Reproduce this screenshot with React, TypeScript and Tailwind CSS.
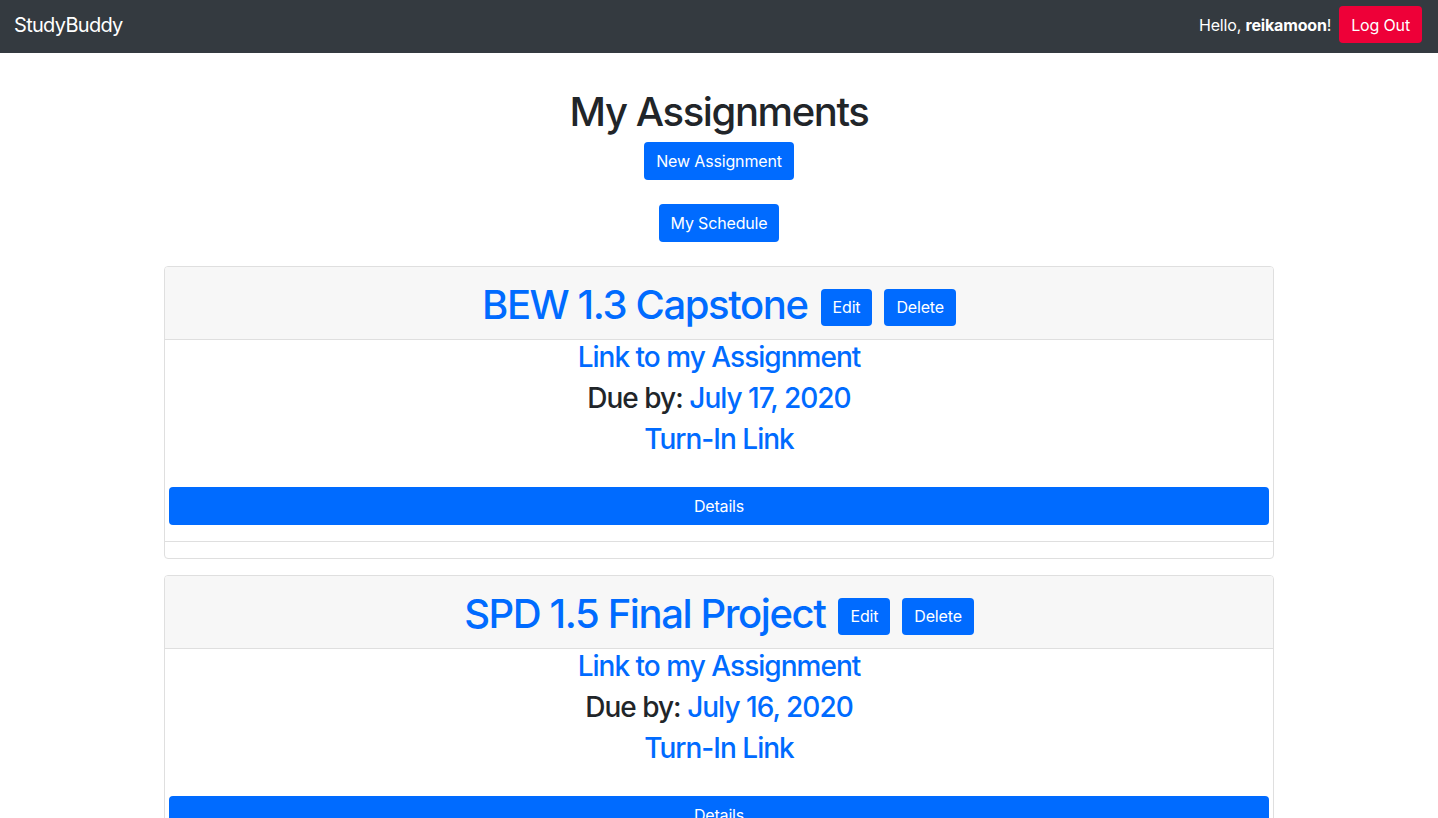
const assignments = [
  { title: 'BEW 1.3 Capstone', due: 'July 17, 2020' },
  { title: 'SPD 1.5 Final Project', due: 'July 16, 2020' },
];

export default function App() {
  return (
    <div className="min-h-screen bg-white font-['Inter',sans-serif] text-[#212529]">
      <nav className="flex h-[53px] items-center justify-between bg-[#343a40] pr-4 pb-1 pl-[14px]">
        <a className="text-[20px] leading-[30px] tracking-[-0.035em] text-white">
          StudyBuddy
        </a>
        <div className="flex items-center gap-2">
          <span className="text-[16px] tracking-[-0.01em] text-white">
            Hello, <b>reikamoon</b>!
          </span>
          <button className="h-[37px] rounded-[4px] bg-[#ee0038] px-3 text-[16px] tracking-[-0.01em] text-white">
            Log Out
          </button>
        </div>
      </nav>

      <main className="mx-auto w-[1110px] pt-[35px]">
        <h1 className="mb-[6px] text-center text-[40px] leading-[48px] font-medium tracking-[-0.035em]">
          My Assignments
        </h1>
        <div className="flex flex-col items-center gap-6">
          <PrimaryButton>New Assignment</PrimaryButton>
          <PrimaryButton>My Schedule</PrimaryButton>
        </div>

        <div className="mt-6 flex flex-col gap-4">
          {assignments.map((a) => (
            <AssignmentCard key={a.title} title={a.title} due={a.due} />
          ))}
        </div>
      </main>
    </div>
  );
}

function PrimaryButton({ children }: { children: React.ReactNode }) {
  return (
    <button className="h-[38px] rounded-[4px] bg-[#006bff] px-3 text-[16px] tracking-[-0.01em] text-white">
      {children}
    </button>
  );
}

function AssignmentCard({ title, due }: { title: string; due: string }) {
  return (
    <div className="overflow-hidden rounded-[4px] border border-[#dfdfdf]">
      <div className="flex items-center justify-center gap-[13px] border-b border-[#dfdfdf] bg-[#f7f7f7] pt-[14px] pb-[10px]">
        <h1 className="text-[40px] leading-[48px] font-medium tracking-[-0.035em] text-[#006bff]">
          {title}
        </h1>
        <div className="mt-1 flex gap-3">
          <button className="h-[37px] rounded-[4px] bg-[#006bff] px-3 text-[16px] tracking-[-0.01em] text-white">
            Edit
          </button>
          <button className="h-[37px] rounded-[4px] bg-[#006bff] px-3 text-[16px] tracking-[-0.01em] text-white">
            Delete
          </button>
        </div>
      </div>
      <div className="pt-px text-center">
        <h3 className="mb-2 text-[28px] leading-[33px] font-medium tracking-[-0.035em] text-[#006bff]">
          Link to my Assignment
        </h3>
        <h3 className="mb-2 text-[28px] leading-[33px] font-medium tracking-[-0.035em]">
          Due by: <span className="text-[#006bff]">{due}</span>
        </h3>
        <h3 className="mb-2 text-[28px] leading-[33px] font-medium tracking-[-0.035em] text-[#006bff]">
          Turn-In Link
        </h3>
        <div className="px-1 pt-[23px] pb-4">
          <button className="h-[38px] w-full rounded-[4px] bg-[#006bff] text-[16px] tracking-[-0.01em] text-white">
            Details
          </button>
        </div>
      </div>
      <div className="h-[17px] border-t border-[#dfdfdf]"></div>
    </div>
  );
}
